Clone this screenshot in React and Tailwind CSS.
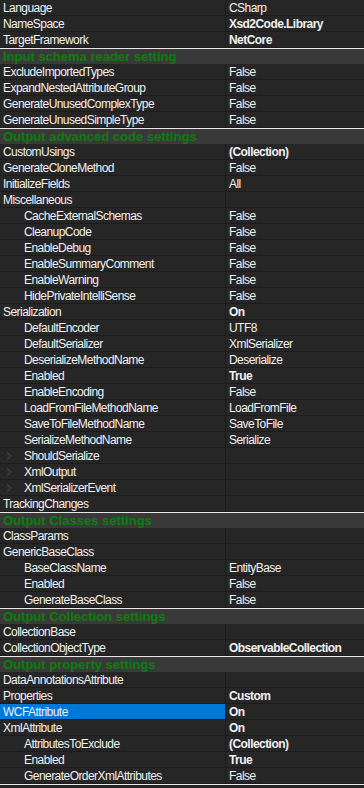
import React from "react";

const rows = [
  { l: "Language", v: "CSharp" },
  { l: "NameSpace", v: "Xsd2Code.Library", b: true },
  { l: "TargetFramework", v: "NetCore", b: true },
  { h: "Input schema reader setting" },
  { l: "ExcludeImportedTypes", v: "False" },
  { l: "ExpandNestedAttributeGroup", v: "False" },
  { l: "GenerateUnusedComplexType", v: "False" },
  { l: "GenerateUnusedSimpleType", v: "False" },
  { h: "Output advanced code settings" },
  { l: "CustomUsings", v: "(Collection)", b: true },
  { l: "GenerateCloneMethod", v: "False" },
  { l: "InitializeFields", v: "All" },
  { l: "Miscellaneous", v: "" },
  { l: "CacheExternalSchemas", v: "False", i: true },
  { l: "CleanupCode", v: "False", i: true },
  { l: "EnableDebug", v: "False", i: true },
  { l: "EnableSummaryComment", v: "False", i: true },
  { l: "EnableWarning", v: "False", i: true },
  { l: "HidePrivateIntelliSense", v: "False", i: true },
  { l: "Serialization", v: "On", b: true },
  { l: "DefaultEncoder", v: "UTF8", i: true },
  { l: "DefaultSerializer", v: "XmlSerializer", i: true },
  { l: "DeserializeMethodName", v: "Deserialize", i: true },
  { l: "Enabled", v: "True", b: true, i: true },
  { l: "EnableEncoding", v: "False", i: true },
  { l: "LoadFromFileMethodName", v: "LoadFromFile", i: true },
  { l: "SaveToFileMethodName", v: "SaveToFile", i: true },
  { l: "SerializeMethodName", v: "Serialize", i: true },
  { l: "ShouldSerialize", v: "", i: true, x: true },
  { l: "XmlOutput", v: "", i: true, x: true },
  { l: "XmlSerializerEvent", v: "", i: true, x: true },
  { l: "TrackingChanges", v: "" },
  { h: "Output Classes settings" },
  { l: "ClassParams", v: "" },
  { l: "GenericBaseClass", v: "" },
  { l: "BaseClassName", v: "EntityBase", i: true },
  { l: "Enabled", v: "False", i: true },
  { l: "GenerateBaseClass", v: "False", i: true },
  { h: "Output Collection settings" },
  { l: "CollectionBase", v: "" },
  { l: "CollectionObjectType", v: "ObservableCollection", b: true },
  { h: "Output property settings" },
  { l: "DataAnnotationsAttribute", v: "" },
  { l: "Properties", v: "Custom", b: true },
  { l: "WCFAttribute", v: "On", b: true, s: true },
  { l: "XmlAttribute", v: "On", b: true },
  { l: "AttributesToExclude", v: "(Collection)", b: true, i: true },
  { l: "Enabled", v: "True", b: true, i: true },
  { l: "GenerateOrderXmlAttributes", v: "False", i: true },
];

const Chevron = () => (
  <svg width="6" height="8" viewBox="0 0 6 8" className="absolute left-[6px] top-[4px]">
    <path d="M1 0.5 L4.5 4 L1 7.5" fill="none" stroke="#404040" strokeWidth="1.3" />
  </svg>
);

export default function App() {
  return (
    <div
      className="w-[364px] h-[788px] bg-[#262627] text-[#f1f1f1] text-[12px] leading-[15px] tracking-[-0.55px] overflow-hidden"
      style={{ fontFamily: '"Liberation Sans", Arial, sans-serif' }}
    >
      {rows.map((r, n) =>
        r.h ? (
          <div
            key={n}
            className="h-[16px] border-t border-[#e8e8e8] bg-[#393939] pl-[3px] pt-[1px] text-[13px] leading-[14px] tracking-[0px] font-bold text-[#0b800b]"
          >
            {r.h}
          </div>
        ) : (
          <div key={n} className="flex h-[16px] border-b border-[#1c1c1c]">
            <div
              className={
                "relative w-[225px] shrink-0 pt-[1px] " +
                (r.i ? "pl-[24px] " : "pl-[3px] ") +
                (r.s ? "bg-[#0078d7]" : "")
              }
            >
              {r.x && <Chevron />}
              {r.l}
            </div>
            <div className="w-[1px] bg-[#1c1c1c]" />
            <div className={"pl-[3px] pt-[1px] " + (r.b ? "font-bold" : "")}>{r.v}</div>
          </div>
        )
      )}
      <div className="h-[1px] bg-[#e8e8e8]" />
    </div>
  );
}
